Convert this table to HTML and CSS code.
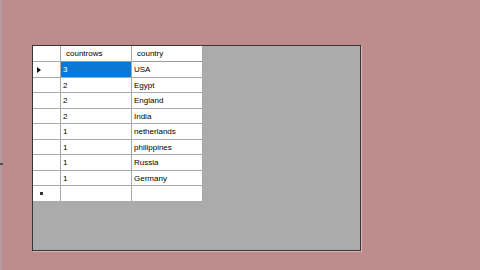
FILE: index.html
```html
<!DOCTYPE html>
<html lang="en">
<head>
    <meta charset="UTF-8">
    <title>Form1</title>
    <link rel="stylesheet" href="styles.css">
</head>
<body>
    <div id="form">
        <div class="edge-strip"><span class="edge-tick"></span></div>

        <div id="grid-view">
            <div class="grid">
                <!-- header row -->
                <div class="cell corner"></div>
                <div class="cell head">countrows</div>
                <div class="cell head">country</div>

                <div class="cell row-head"><span class="current-arrow"></span></div>
                <div class="cell selected">3</div>
                <div class="cell">USA</div>

                <div class="cell row-head"></div>
                <div class="cell">2</div>
                <div class="cell">Egypt</div>

                <div class="cell row-head"></div>
                <div class="cell">2</div>
                <div class="cell">England</div>

                <div class="cell row-head"></div>
                <div class="cell">2</div>
                <div class="cell">India</div>

                <div class="cell row-head"></div>
                <div class="cell">1</div>
                <div class="cell">netherlands</div>

                <div class="cell row-head"></div>
                <div class="cell">1</div>
                <div class="cell">philippines</div>

                <div class="cell row-head"></div>
                <div class="cell">1</div>
                <div class="cell">Russia</div>

                <div class="cell row-head"></div>
                <div class="cell">1</div>
                <div class="cell">Germany</div>

                <!-- new row -->
                <div class="cell row-head"><span class="new-mark"></span></div>
                <div class="cell"></div>
                <div class="cell"></div>
            </div>
        </div>
    </div>
</body>
</html>
```

FILE: styles.css
```css
:root {
    --form-bg: #bd8c8c;
    --grid-bg: #ababab;
    --grid-line: #a9a9a9;
    --select: #0a78d4;
    --text: #000;
}

* {
    margin: 0;
    padding: 0;
    box-sizing: border-box;
}

body {
    background-color: var(--form-bg);
    font-family: "Liberation Sans", Arial, sans-serif;
    font-size: 8px;
    color: var(--text);
    height: 270px;
    overflow: hidden;
}

#form {
    display: flex;
    height: 100%;
}

.edge-strip {
    width: 2px;
    height: 100%;
    background-color: #b49c9c;
    display: flex;
    flex-direction: column;
    justify-content: flex-start;
    padding-top: 163px;
    margin-right: 30px;
}

.edge-tick {
    width: 3px;
    height: 2px;
    background-color: #5a4a4a;
}

#grid-view {
    margin-top: 45px;
    width: 329px;
    height: 206px;
    background-color: var(--grid-bg);
    border: 1px solid #3c3434;
    box-shadow: 1px 1px 0 #d8b4b4;
}

.grid {
    display: grid;
    grid-template-columns: 28px 71px 71px;
    grid-template-rows: 16px 16px 15px 16px 15px 16px 15px 16px 15px 16px;
    width: 170px;
    background-color: #fff;
}

.cell {
    border-right: 1px solid var(--grid-line);
    border-bottom: 1px solid var(--grid-line);
    display: flex;
    align-items: center;
    padding-left: 2px;
    white-space: nowrap;
    overflow: hidden;
}

.head {
    padding-left: 5px;
    border-bottom-color: #9a9a9a;
}

.row-head {
    padding-left: 4px;
}

.selected {
    background-color: var(--select);
    color: #fff;
}

.current-arrow {
    width: 0;
    height: 0;
    border-top: 3.5px solid transparent;
    border-bottom: 3.5px solid transparent;
    border-left: 4px solid #111;
}

.new-mark {
    width: 3px;
    height: 3px;
    margin-left: 3px;
    background-color: #333;
}
```
